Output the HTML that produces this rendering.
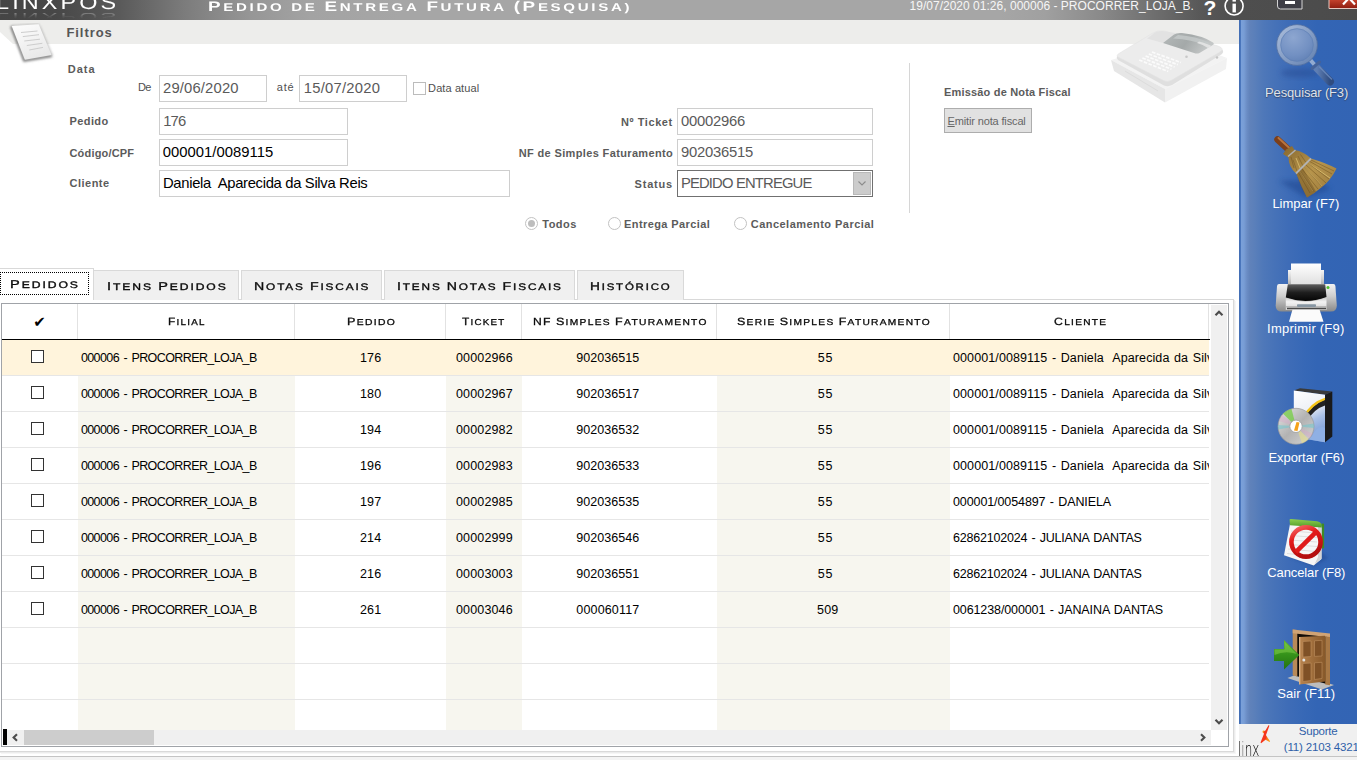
<!DOCTYPE html>
<html lang="pt-BR">
<head>
<meta charset="utf-8">
<title>Pedido de Entrega Futura (Pesquisa)</title>
<style>
*{box-sizing:border-box;margin:0;padding:0}
html,body{width:1357px;height:760px;overflow:hidden;background:#fff}
body{position:relative;font-family:"Liberation Sans","DejaVu Sans",sans-serif;font-size:11px;color:#000}
.abs{position:absolute}
svg{position:absolute;overflow:visible}
#titlebar{position:absolute;left:0;top:0;width:1357px;height:20px;
 background:linear-gradient(90deg,#454545 0px,#474747 55px,#5a5a5a 120px,#7c7c7c 185px,#969696 250px,#a3a3a3 310px,#a6a6a6 400px,#a6a6a6 1000px,#a0a0a0 1045px,#8a8a8a 1100px,#6e6e6e 1155px,#585858 1200px,#4e4e4e 1240px,#4b4b4b 1357px)}
.bg{text-rendering:geometricPrecision;white-space:nowrap;transform-origin:0 50%;text-transform:uppercase;position:absolute}
.bg .w{display:inline-block}
.bg .w::first-letter{font-size:120%}
.bg .ww{font-size:120%}
#ttl .w::first-letter{font-size:125%}
.th1 .w::first-letter{font-size:122%}
.th1 .ww{font-size:119%}
#band{position:absolute;left:0;top:20px;width:1239px;height:24px;background:#ededeb}
.t{position:absolute;white-space:pre;line-height:16px}
.lbl{font-weight:bold;font-size:11px;color:#5b5b5b}
.sm{font-size:11px;color:#505050}
.it{font-size:14.8px;color:#5a5a5a}
.it.k{color:#000}
.inp{position:absolute;border:1px solid #cecece;background:#fff;height:27px}
#side{position:absolute;left:1239px;top:20px;width:118px;height:704px;
 background:linear-gradient(90deg,#3f6bb2 0px,#4a76bc 1.5px,#7aa0d9 2.5px,#789dd5 5px,#6a8cc4 8px,#6082ba 11px,#5a7fba 16px,#4f78b9 24px,#4672b8 36px,#3e6cb7 50px,#3768b6 65px,#3365b5 78px,#3364b4 118px)}
.sl{color:#fff;font-size:13px}
#sup{position:absolute;left:1239px;top:724px;width:118px;height:32px;background:#f0f0f0}
#bot{position:absolute;left:0;top:756px;width:1357px;height:4px;background:#f3f3f3;border-top:1px solid #c4c4c4}
.tab{position:absolute;top:270px;height:30px;background:#f0f0f0;border:1px solid #d9d9d9;border-bottom:none}
.t1{font-size:9.5px;line-height:16px;letter-spacing:1.5px;color:#111;-webkit-text-stroke:0.33px #000}
.th1{font-size:8.6px;line-height:14px;letter-spacing:1.1px;color:#111;-webkit-text-stroke:0.28px #000}
#tabpage{position:absolute;left:-1px;top:299px;width:1235px;height:453px;border:1px solid #d9d9d9;background:#fff;box-shadow:1px 1px 0 #ececec,2px 2px 0 #f6f6f6}
#grid{position:absolute;left:1px;top:303px;width:1228px;height:444px;border:1px solid #a0a3a8;background:#fff;overflow:hidden}
.col{position:absolute;top:0;height:426px;background:#f7f6ef}
.row{position:absolute;left:0;width:1207px;height:36px;border-bottom:1px solid #e6e6e6}
.c{font-size:12.5px;color:#000;top:9px}
.cb{position:absolute;left:29px;top:10px;width:13px;height:13px;border:1px solid #333;background:#fff}
.rad{position:absolute;width:13px;height:13px;border:1px solid #c2c2c2;border-radius:50%;background:#fff}
.rad i{position:absolute;left:2px;top:2px;width:7px;height:7px;border-radius:50%;background:#bdbdbd}
</style>
</head>
<body>
<div id="titlebar"></div>
<div id="band"></div>
<svg style="left:0;top:20px" width="20" height="26"><path d="M0 12 L13 24 L0 24Z" fill="#fff"/></svg>
<div class="bg" id="linx" style="left:-4px;top:-7.4px;font-size:19.5px;letter-spacing:2.6px;color:#fff;line-height:20px;transform:scaleX(1.2)">LINXPOS</div>
<div class="bg" id="linxr" style="left:-4px;top:6px;font-size:19.5px;letter-spacing:2.6px;color:transparent;background:linear-gradient(to bottom,rgba(255,255,255,0) 25%,rgba(255,255,255,.1) 50%,rgba(255,255,255,.42) 85%);-webkit-background-clip:text;background-clip:text;line-height:20px;transform:scale(1.2,-0.55)">LINXPOS</div>
<div class="bg" id="ttl" style="left:207.6px;top:-4.2px;line-height:20px;color:#fff;font-weight:bold;font-size:11.2px;letter-spacing:2px;transform:scaleX(1.346)"><span class="w">Pedido</span> de <span class="w">Entrega</span> <span class="w">Futura</span> <span class="w">(Pesquisa)</span></div>
<div id="dt" class="t " style="left:909.5px;top:-1.6px;font-size:12px;letter-spacing:0.02px;color:#f6f6f6">19/07/2020 01:26, 000006 - PROCORRER_LOJA_B.</div>
<div class="abs" id="q" style="left:1203.5px;top:-3.8px;font-size:21px;font-weight:bold;color:#fff;line-height:24px">?</div>
<svg style="left:1223px;top:0" width="22" height="17"><circle cx="11.1" cy="6" r="9" fill="none" stroke="#fff" stroke-width="1.6"/><rect x="9.5" y="3.6" width="3.4" height="8.8" fill="#fff"/><rect x="9.5" y="-1" width="3.4" height="2.6" fill="#fff"/></svg>
<svg style="left:1277px;top:0" width="80" height="10"><defs><linearGradient id="rg" x1="0" y1="0" x2="0" y2="1"><stop offset="0" stop-color="#c8452f"/><stop offset="1" stop-color="#8e1d10"/></linearGradient></defs><path d="M0.5 -1 V6 Q0.5 9 3.5 9 H25 V-1Z" fill="#3e3e46" stroke="#d4d4d4" stroke-width="1"/><rect x="8" y="1" width="10" height="3" fill="#fff"/><path d="M52 -1 V8.5 H81 V-1Z" fill="url(#rg)" stroke="#e6c8c0" stroke-width="1"/><path d="M66 4.5 L72 -2 M78 4.5 L72 -2" stroke="#fff" stroke-width="2.2" fill="none"/></svg>
<div id="filtros" class="t lbl" style="left:66.4px;top:25.1px;font-size:13px;letter-spacing:0.94px;color:#565656">Filtros</div>
<div id="l_data" class="t lbl" style="left:67.7px;top:61.1px;font-size:11px;letter-spacing:1.05px;">Data</div>
<div id="l_de" class="t sm" style="left:137.9px;top:79.3px;font-size:11px;letter-spacing:-0.46px;">De</div>
<div id="l_ate" class="t sm" style="left:276.7px;top:79.3px;font-size:11px;letter-spacing:0.85px;">até</div>
<div id="l_da" class="t sm" style="left:428.1px;top:80.2px;font-size:11px;letter-spacing:0.10px;">Data atual</div>
<div id="l_ped" class="t lbl" style="left:69.5px;top:113.1px;font-size:11px;letter-spacing:0.41px;">Pedido</div>
<div id="l_cod" class="t lbl" style="left:69.5px;top:144.8px;font-size:11px;letter-spacing:0.18px;">Código/CPF</div>
<div id="l_cli" class="t lbl" style="left:69.5px;top:175.3px;font-size:11px;letter-spacing:0.49px;">Cliente</div>
<div id="l_tic" class="t lbl" style="left:621.0px;top:114.2px;font-size:11px;letter-spacing:0.57px;">Nº Ticket</div>
<div id="l_nf" class="t lbl" style="left:518.7px;top:144.8px;font-size:11px;letter-spacing:0.36px;">NF de Simples Faturamento</div>
<div id="l_st" class="t lbl" style="left:634.6px;top:175.8px;font-size:11px;letter-spacing:0.80px;">Status</div>
<div id="r1" class="t lbl" style="left:542.3px;top:215.9px;font-size:11px;letter-spacing:0.45px;">Todos</div>
<div id="r2" class="t lbl" style="left:624.0px;top:215.9px;font-size:11px;letter-spacing:0.41px;">Entrega Parcial</div>
<div id="r3" class="t lbl" style="left:750.8px;top:215.9px;font-size:11px;letter-spacing:0.46px;">Cancelamento Parcial</div>
<div id="l_em" class="t lbl" style="left:944.0px;top:84.2px;font-size:11px;letter-spacing:0.18px;">Emissão de Nota Fiscal</div>
<div class="inp" style="left:159px;top:75px;width:108px;"></div>
<div class="inp" style="left:299px;top:75px;width:108px;"></div>
<div class="inp" style="left:159px;top:108px;width:189px;"></div>
<div class="inp" style="left:159px;top:139px;width:189px;"></div>
<div class="inp" style="left:159px;top:170px;width:351px;"></div>
<div class="inp" style="left:677px;top:108px;width:196px;"></div>
<div class="inp" style="left:677px;top:139px;width:196px;"></div>
<div class="inp" style="left:677px;top:170px;width:196px;border-color:#707070"></div>
<div id="i_de" class="t it" style="left:163.0px;top:79.8px;font-size:14.8px;letter-spacing:0.16px;">29/06/2020</div>
<div id="i_ate" class="t it" style="left:303.8px;top:79.8px;font-size:14.8px;letter-spacing:0.23px;">15/07/2020</div>
<div id="i_ped" class="t it" style="left:163.2px;top:112.6px;font-size:14.8px;letter-spacing:-0.80px;">176</div>
<div id="i_cod" class="t it k" style="left:162.7px;top:143.7px;font-size:14.8px;letter-spacing:0.04px;">000001/0089115</div>
<div id="i_cli" class="t it k" style="left:163.0px;top:174.7px;font-size:14.8px;letter-spacing:-0.32px;">Daniela  Aparecida da Silva Reis</div>
<div id="i_tic" class="t it" style="left:680.9px;top:112.9px;font-size:14.8px;letter-spacing:-0.21px;">00002966</div>
<div id="i_nf" class="t it" style="left:680.9px;top:143.9px;font-size:14.8px;letter-spacing:-0.21px;">902036515</div>
<div id="i_st" class="t it" style="left:680.9px;top:174.9px;font-size:14.8px;letter-spacing:-0.83px;">PEDIDO ENTREGUE</div>
<div class="abs" style="left:413px;top:82px;width:13px;height:13px;border:1px solid #bcbcbc;background:#fff"></div>
<div class="abs" style="left:853px;top:172px;width:18px;height:23px;background:#cccccc;border:1px solid #b8b8b8"></div>
<svg style="left:857px;top:180px" width="10" height="7" viewBox="0 0 10 7"><path d="M1.5 1.5 L5 5 L8.5 1.5" fill="none" stroke="#8c8c8c" stroke-width="1.1"/></svg>
<div class="rad" style="left:525px;top:217px"><i></i></div>
<div class="rad" style="left:608px;top:217px"></div>
<div class="rad" style="left:734px;top:217px"></div>
<div class="abs" style="left:909px;top:63px;width:1px;height:150px;background:#d6d6d6"></div>
<div class="abs" id="btn" style="left:944px;top:108px;width:88px;height:25px;background:#e1e1e1;border:1px solid #adadad"></div>
<div id="btnt" class="t sm" style="left:947.5px;top:113.0px;font-size:11px;letter-spacing:-0.14px;color:#666"><u>E</u>mitir nota fiscal</div>
<div id="side"></div>
<svg id="icons" style="left:0;top:0" width="1357" height="760" viewBox="0 0 1357 760">
<defs>
<filter id="bl0" x="-30%" y="-30%" width="160%" height="160%"><feGaussianBlur stdDeviation="1"/></filter>
<filter id="bl1" x="-30%" y="-30%" width="160%" height="160%"><feGaussianBlur stdDeviation="1.6"/></filter>
<filter id="bl2" x="-30%" y="-30%" width="160%" height="160%"><feGaussianBlur stdDeviation="2.5"/></filter>
<radialGradient id="glass" cx="0.4" cy="0.3" r="0.8"><stop offset="0" stop-color="#8da6d0"/><stop offset="0.6" stop-color="#7290c2"/><stop offset="1" stop-color="#5b7bb0"/></radialGradient>
<linearGradient id="ring" x1="0" y1="0" x2="1" y2="1"><stop offset="0" stop-color="#a9bcda"/><stop offset="1" stop-color="#6482b2"/></linearGradient>
<linearGradient id="hand" x1="0" y1="0" x2="1" y2="0"><stop offset="0" stop-color="#5f7fb4"/><stop offset="1" stop-color="#2f4c80"/></linearGradient>
<linearGradient id="straw" x1="0" y1="0" x2="1" y2="1"><stop offset="0" stop-color="#86672e"/><stop offset="0.5" stop-color="#b8954c"/><stop offset="1" stop-color="#97763a"/></linearGradient>
<linearGradient id="silver" x1="0" y1="0" x2="0" y2="1"><stop offset="0" stop-color="#f6f6f6"/><stop offset="0.55" stop-color="#d2d2d2"/><stop offset="1" stop-color="#a9a9a9"/></linearGradient>
<linearGradient id="silver2" x1="0" y1="0" x2="0" y2="1"><stop offset="0" stop-color="#f2f2f2"/><stop offset="0.45" stop-color="#cdcdcd"/><stop offset="0.8" stop-color="#a2a2a2"/><stop offset="1" stop-color="#8a8a8a"/></linearGradient>
<linearGradient id="front" x1="0" y1="0" x2="0" y2="1"><stop offset="0" stop-color="#c9c9c9"/><stop offset="0.35" stop-color="#f3f3f3"/><stop offset="1" stop-color="#d2d2d2"/></linearGradient>
<linearGradient id="blk" x1="0" y1="0" x2="0" y2="1"><stop offset="0" stop-color="#5e5e5e"/><stop offset="0.5" stop-color="#1e1e1e"/><stop offset="1" stop-color="#050505"/></linearGradient>
<linearGradient id="pap" x1="0" y1="0" x2="0" y2="1"><stop offset="0" stop-color="#ffffff"/><stop offset="1" stop-color="#dedede"/></linearGradient>
<linearGradient id="boxf" x1="0" y1="0" x2="0.3" y2="1"><stop offset="0" stop-color="#ffffff"/><stop offset="0.45" stop-color="#eef1f6"/><stop offset="0.7" stop-color="#a9c0e6"/><stop offset="1" stop-color="#7e9fd8"/></linearGradient>
<linearGradient id="cd" x1="0" y1="0" x2="1" y2="1"><stop offset="0" stop-color="#e6e6e6"/><stop offset="0.5" stop-color="#b2b2b2"/><stop offset="1" stop-color="#d6d6d6"/></linearGradient>
<linearGradient id="red" x1="0" y1="0" x2="0.4" y2="1"><stop offset="0" stop-color="#f46a6a"/><stop offset="0.4" stop-color="#e41a1a"/><stop offset="1" stop-color="#b40e0e"/></linearGradient>
<linearGradient id="grn" x1="0" y1="0" x2="0" y2="1"><stop offset="0" stop-color="#8fd04e"/><stop offset="1" stop-color="#4f9a2a"/></linearGradient>
<linearGradient id="arrow" x1="0" y1="0" x2="0" y2="1"><stop offset="0" stop-color="#5fb52e"/><stop offset="0.5" stop-color="#35921a"/><stop offset="1" stop-color="#247212"/></linearGradient>
<linearGradient id="door" x1="0" y1="0" x2="1" y2="0"><stop offset="0" stop-color="#b8844f"/><stop offset="1" stop-color="#875829"/></linearGradient>
<linearGradient id="cover" x1="0" y1="0" x2="1" y2="0.3"><stop offset="0" stop-color="#b4b9b9"/><stop offset="0.55" stop-color="#a4a9a9"/><stop offset="1" stop-color="#c4c7c7"/></linearGradient>
<linearGradient id="sheet" x1="0" y1="0" x2="0.5" y2="1"><stop offset="0" stop-color="#fefefe"/><stop offset="1" stop-color="#e9e9e9"/></linearGradient>
</defs>

<!-- paper sheet (filtros) -->
<path d="M10.5 27 L24 62 L53 57 L40 27Z" fill="#8a8a8a" opacity=".4" filter="url(#bl1)"/>
<path d="M11.2 26.2 L24.2 60.5 L51.5 55.8" fill="none" stroke="#505050" stroke-width="2.4" opacity=".62" filter="url(#bl0)"/>
<path d="M11.7 25.8 L38.7 24" fill="none" stroke="#8a8a8a" stroke-width="1" opacity=".7" filter="url(#bl0)"/>
<path d="M38.7 24.2 L51.8 55.3" fill="none" stroke="#9a9a9a" stroke-width="1" opacity=".6" filter="url(#bl0)"/>
<path d="M11.7 26 L38.7 24.2 L51.5 55.1 L24.9 59.7Z" fill="url(#sheet)"/>
<g stroke="#cdcdcd" stroke-width="1" fill="none"><path d="M21 32.5 L37.5 31"/><path d="M22.8 36.6 L39 34.7"/><path d="M24.3 41 L40 39.2"/><path d="M26.8 45.5 L42.3 43.3"/><path d="M29.3 50 L43 47.4"/></g>

<!-- cash register -->
<g>
<path d="M1111 60 L1165 89 L1227 58 L1180 40Z" fill="#f3f3f3"/>
<path d="M1111 60 L1165 89 L1165 102.5 L1114 71Z" fill="#e6e6e6"/>
<path d="M1165 89 L1227 58 L1226 69 L1165 102.5Z" fill="#f1f1f1"/>
<path d="M1125 71 L1158 91" stroke="#dcdcdc" stroke-width="1"/>
<path d="M1117 56 Q1116 58 1118 60 L1164 85.5 Q1168 87 1172 85 L1222 54 Q1224 52 1222.6 49.5 L1168 79Z" fill="#dfdfdf"/>
<path d="M1119 53.5 L1152 33.5 Q1157 30 1164 31 L1218 46 Q1225 48.5 1220 52 L1171 80.5 Q1167.500 82.500 1163.500 80.500 L1119 57.500 Q1115.500 55.500 1119 53.500Z" fill="#ececec" stroke="#e3e3e3" stroke-width=".6"/>
<path d="M1147 38.5 L1155 32.5 Q1158 30.500 1163 31 L1178 33.500 L1163 43Z" fill="#e2e2e2"/>
<path d="M1163 43 L1174 34.500 Q1177 32.500 1182 33 Q1203 35.500 1213 42.500 Q1215 44 1212 45.500 L1199.500 53 Q1197 54 1194 53Z" fill="url(#cover)"/>
<path d="M1178 35 Q1196 36 1210 43 L1206 45.500 Q1192 39.500 1173 38.500Z" fill="#c6caca" opacity=".8"/><path d="M1199 41.500 Q1207 43.500 1211.500 46 L1208 48 Q1204 45 1197 43Z" fill="#e8e8e8" opacity=".8"/>
<g stroke="#fbfbfb" stroke-width="1.7" stroke-dasharray="3.6 1.4" fill="none">
<path d="M1152 52 L1181 62.500"/><path d="M1148.800 54 L1177.800 64.700"/><path d="M1145.600 56 L1174.600 67"/><path d="M1142.400 58 L1171.400 69.200"/><path d="M1139.200 60 L1168.200 71.500"/>
</g>
<circle cx="1186.500" cy="56.800" r="1.300" fill="#c8c8c8"/><circle cx="1217" cy="57.500" r="1.200" fill="#c4c4c4"/>
</g>

<!-- magnifier -->
<ellipse cx="1300" cy="73" rx="19" ry="4.500" fill="#2a4f96" opacity=".55" filter="url(#bl2)"/>
<path d="M1309.500 59 L1316.500 67" stroke="#93abd0" stroke-width="4"/>
<path d="M1317 68 L1330 81.500" stroke="url(#hand)" stroke-width="8" stroke-linecap="round"/>
<path d="M1319.500 67 L1331.500 79" stroke="#6d8cc0" stroke-width="1.500" stroke-linecap="round" opacity=".8"/>
<path d="M1312 68.500 L1319.500 62" stroke="#45639a" stroke-width="3" stroke-linecap="round"/>
<circle cx="1297" cy="45" r="18.500" fill="url(#glass)" stroke="url(#ring)" stroke-width="4"/>
<circle cx="1297" cy="45" r="16.300" fill="none" stroke="#5f7fb4" stroke-width=".8" opacity=".8"/>
<circle cx="1297" cy="45" r="20.400" fill="none" stroke="#4f6c9e" stroke-width=".9" opacity=".85"/>

<!-- broom -->
<path d="M1279 181 L1306 198 L1331 189 L1318 180Z" fill="#234a92" opacity=".6" filter="url(#bl2)"/>
<path d="M1277.500 139.500 L1290 151" stroke="#7c3f1a" stroke-width="6.500" stroke-linecap="round"/>
<path d="M1278.500 138 L1290.500 149" stroke="#b8743f" stroke-width="2" stroke-linecap="round"/>
<path d="M1283 154 L1286 149.500 L1292 146 L1294.500 150 Q1304 151.500 1311 158.500 Q1326 163 1336.500 168.500 Q1331 180 1322 187 Q1315 193 1307 197.500 Q1301 186 1296.500 174 Q1288.500 167 1288.500 157.500Z" fill="url(#straw)"/>
<g stroke="#7f6128" stroke-width=".9" fill="none" opacity=".75"><path d="M1298 172 L1310 193"/><path d="M1302 169 L1318 189"/><path d="M1306 165 L1326 183"/><path d="M1309 161 L1332 174"/><path d="M1293 160 L1297 171"/><path d="M1298 156 L1303 166"/></g>
<g stroke="#e3c877" stroke-width=".9" fill="none" opacity=".8"><path d="M1300 171 L1313 191"/><path d="M1304 167 L1322 186"/><path d="M1308 163 L1330 178"/><path d="M1296 158 L1300 168"/></g>
<path d="M1296.5 174 Q1300 186 1307 197.5 Q1312 195 1316 191.500 L1302 167Z" fill="#6b4e1e" opacity=".45"/>
<g stroke="#6e5222" stroke-width=".7" fill="none" opacity=".7"><path d="M1300 170.500 L1314 191.500"/><path d="M1304 167 L1322 186.500"/><path d="M1308 163 L1329 179"/><path d="M1311 160 L1334 171"/><path d="M1291 157 L1294 168"/><path d="M1300.500 154.500 L1306 162.500"/></g>
<path d="M1288 156.500 L1295.500 150" stroke="#aeaeae" stroke-width="1.600"/>
<path d="M1296 173.500 L1311 158.500" stroke="#b2b2b2" stroke-width="1.800"/>

<!-- printer -->
<rect x="1288" y="270" width="36" height="16" fill="url(#silver)"/>
<rect x="1291" y="263.500" width="30" height="22" fill="url(#pap)"/>
<path d="M1279 284 Q1277.300 284 1277 286 L1275.700 305.500 Q1275.700 311.500 1281.500 311.500 L1331 311.500 Q1336.800 311.500 1336.800 305.500 L1335.400 286 Q1335.200 284 1333.500 284Z" fill="url(#silver2)"/>
<path d="M1287.800 284.300 L1325.200 284.300 L1326.500 297 Q1306 304.500 1285.800 297.500Z" fill="url(#blk)"/>
<path d="M1285.800 298 Q1306 305 1326.500 297.500 L1326.500 310 L1285.800 310Z" fill="url(#front)"/>
<rect x="1286" y="306.300" width="40.500" height="1" fill="#a8a8a8"/>
<rect x="1297" y="304.300" width="19" height="2.600" rx=".8" fill="#8796a3"/>
<path d="M1292.500 309.500 L1319.500 309.500 L1323.500 321.800 L1289 321.800Z" fill="#fbfbfb"/>
<path d="M1287 308.600 L1326 308.600" stroke="#4a4a4a" stroke-width="1.500"/>
<circle cx="1328" cy="287.600" r="1.500" fill="#4fc02c"/>

<!-- export -->
<path d="M1293.800 390.400 L1300 388.300 L1332.300 391.500 L1325 394.800Z" fill="#3a3a3a"/>
<path d="M1325 394.800 L1332.300 391.500 L1332.300 436.500 L1325 442.200Z" fill="#1a1a1a"/>
<path d="M1293.800 390.400 L1325 394.800 L1325 442.200 L1293.800 436.900Z" fill="url(#boxf)"/>
<path d="M1304 418 Q1312 404 1325 399.500 L1325 405.500 Q1314 409 1308 420Z" fill="#222"/>
<path d="M1302.500 417 Q1311 402 1325 397.800 L1325 400 Q1312.500 404.500 1304.500 418Z" fill="#f5c518"/>
<path d="M1312 436 Q1318 424 1325 428 L1325 442.200 L1308 439.300Z" fill="#8fb0e4"/>
<circle cx="1296" cy="426.300" r="18" fill="url(#cd)" stroke="#9a9a9a" stroke-width=".7"/>
<path d="M1296 426.300 L1283 413.800 A18 18 0 0 1 1291.500 408.900Z" fill="#6fcf3a" opacity=".7"/>
<path d="M1296 426.300 L1279 421 A18 18 0 0 1 1282 414.800Z" fill="#d9a6c8" opacity=".4"/>
<path d="M1296 426.300 L1278.200 429.500 A18 18 0 0 1 1278 425Z" fill="#5fc8d0" opacity=".45"/>
<path d="M1296 426.300 L1313.800 423.500 A18 18 0 0 1 1314 428Z" fill="#5fc8d0" opacity=".45"/>
<path d="M1296 426.300 L1312.500 433.500 A18 18 0 0 1 1309.500 438.200Z" fill="#d9a6c8" opacity=".4"/>
<path d="M1296 426.300 L1308.500 439.300 A18 18 0 0 1 1302 443.300Z" fill="#e8e08a" opacity=".6"/>
<circle cx="1296" cy="426.300" r="6.200" fill="#fff" stroke="#9c9c9c" stroke-width=".8"/>
<path d="M1294 430.500 L1296.500 422 L1299.500 422.500 L1297.500 431Z" fill="#f5a21c"/>

<!-- cancel -->
<path d="M1287 556 L1314 567 L1328 558 L1322 552Z" fill="#234a92" opacity=".5" filter="url(#bl1)"/>
<rect x="1321.300" y="523.500" width="2.800" height="25" rx="1" fill="#3f8a26"/>
<path d="M1290 524 L1321.500 526 L1321.500 559 L1313.700 565.400 L1284 555.300Z" fill="#f6f6f6"/>
<path d="M1314.500 564.500 L1321.500 558.500 L1321.500 527 L1318 527 L1318 557Z" fill="#d4d4d4"/>
<g stroke="#d8d8d8" stroke-width=".8"><path d="M1291 531 L1317 533"/><path d="M1290.500 535.500 L1317 537.500"/><path d="M1290 540 L1317 542"/><path d="M1289 544.500 L1317 546.500"/><path d="M1288 549 L1316 551.500"/><path d="M1287 553.500 L1315 556.500"/></g>
<path d="M1289.600 519.800 Q1289.600 518.800 1291 518.900 L1317 521.200 Q1322.500 522 1321.800 527.500 L1290 525.300Z" fill="url(#grn)"/>
<circle cx="1306" cy="542" r="14.600" fill="none" stroke="url(#red)" stroke-width="4.600"/>
<path d="M1295.800 552.200 L1316.200 531.800" stroke="#e01a1a" stroke-width="4.600"/>

<!-- door -->
<path d="M1287.400 678 L1298 674 L1334 685 L1322 689.500Z" fill="#bdbdbd"/>
<path d="M1296 632 L1327 636 L1327 684 L1296 676Z" fill="#120c06"/>
<path d="M1292.700 629.500 L1297.300 630 L1297.300 676.500 L1292.700 675.400Z" fill="#b98a58"/>
<path d="M1292.700 629.500 L1330 633.400 L1330 637.300 L1292.700 633.300Z" fill="#d0a374"/>
<path d="M1325.200 636.500 L1330 637 L1330 685.200 L1325.200 684.500Z" fill="#a87845"/>
<path d="M1299.100 637 L1325 635.800 L1325.400 681.600 L1299.100 684.400Z" fill="url(#door)"/>
<path d="M1299.100 637 L1300.300 637 L1300.300 684.200 L1299.100 684.400Z" fill="#e0b78a"/>
<g fill="#7f5126" stroke="#c09060" stroke-width=".6"><path d="M1303 641.500 L1311 641 L1311 656.500 L1303 657Z"/><path d="M1314.500 640.800 L1322 640.300 L1322 656 L1314.500 656.400Z"/><path d="M1303 663.500 L1311 663 L1311 680.500 L1303 681.500Z"/><path d="M1314.500 662.800 L1322 662.300 L1322 678.500 L1314.500 679.500Z"/></g>
<circle cx="1303.800" cy="660" r="1.500" fill="#e4e4e4"/>
<path d="M1274 649 L1284 649 L1284 640 L1299.300 655 L1284 669.400 L1284 661 L1274 661Z" fill="url(#arrow)"/>
<path d="M1274.500 649.500 L1284.500 649.500 L1284.500 641.500 L1297 654 Q1285 650 1274.500 655Z" fill="#8fd655" opacity=".45"/>
</svg>

<div id="s1" class="t sl" style="left:1265.1px;top:85.2px;font-size:13px;letter-spacing:-0.16px;color:#dfe4ee;text-shadow:0 0 1px #2d3f66,0 1px 1px #3a4d74">Pesquisar (F3)</div>
<div id="s2" class="t sl" style="left:1272.4px;top:196.4px;font-size:13px;letter-spacing:-0.02px;">Limpar (F7)</div>
<div id="s3" class="t sl" style="left:1267.1px;top:320.8px;font-size:13px;letter-spacing:0.24px;">Imprimir (F9)</div>
<div id="s4" class="t sl" style="left:1268.4px;top:449.8px;font-size:13px;letter-spacing:-0.05px;">Exportar (F6)</div>
<div id="s5" class="t sl" style="left:1267.3px;top:565.2px;font-size:13px;letter-spacing:-0.11px;">Cancelar (F8)</div>
<div id="s6" class="t sl" style="left:1277.2px;top:685.8px;font-size:13px;letter-spacing:0.13px;">Sair (F11)</div>
<div id="sup"></div>
<div id="sup1" class="t " style="left:1298.8px;top:723.0px;font-size:11.5px;letter-spacing:-0.23px;color:#2f5fa8">Suporte</div>
<div id="sup2" class="t " style="left:1283.8px;top:738.9px;font-size:11.5px;letter-spacing:-0.15px;color:#2f5fa8">(11) 2103 4321</div>
<div class="abs" id="linxlogo" style="left:1237.9px;top:740.3px;font-family:'DejaVu Sans Light','DejaVu Sans','Liberation Sans',sans-serif;font-weight:200;font-size:19.5px;line-height:20px;color:#000;transform:scaleX(.615);transform-origin:0 0;white-space:nowrap">l<span style="color:#666">i</span>nx</div>
<svg style="left:0;top:0" width="1357" height="760"><defs><linearGradient id="fl" x1="0" y1="0" x2="1" y2="0"><stop offset="0" stop-color="#f5361c"/><stop offset="0.45" stop-color="#f8641c"/><stop offset="1" stop-color="#fdae1e"/></linearGradient></defs><circle cx="1263.7" cy="731.7" r="1.2" fill="#fba01c"/><path d="M1265.4 734.6 L1270.1 741.3 L1269.6 742 L1265.6 739.7 L1261.6 742.6Z" fill="url(#fl)"/><path d="M1268.7 725 L1269.4 725.8 L1266 735 L1266.6 738.2 L1261.2 743.2 L1260.5 742.5 L1263.9 734 L1263.5 731.8 L1265.4 730.6Z" fill="#f5361c"/></svg>
<div id="bot"></div>
<div id="tabpage"></div>
<div class="tab" style="left:93px;width:146px"></div>
<div class="tab" style="left:241px;width:141px"></div>
<div class="tab" style="left:384px;width:191px"></div>
<div class="tab" style="left:577px;width:107px"></div>
<div class="abs" style="left:-1px;top:268px;width:95px;height:32px;background:#fff;border:1px solid #d9d9d9;border-bottom:none"></div>
<div class="abs" style="left:0;top:272px;width:89px;height:23px;border:1px dotted #000"></div>
<div class="bg t1" id="t1" style="left:10.2px;top:277px;transform:scaleX(1.28)"><span class='w'>Pedidos</span></div>
<div class="bg t1" id="t2" style="left:106.6px;top:279px;transform:scaleX(1.274)"><span class='w'>Itens</span> <span class='w'>Pedidos</span></div>
<div class="bg t1" id="t3" style="left:254.1px;top:279px;transform:scaleX(1.242)"><span class='w'>Notas</span> <span class='w'>Fiscais</span></div>
<div class="bg t1" id="t4" style="left:397.3px;top:279px;transform:scaleX(1.239)"><span class='w'>Itens</span> <span class='w'>Notas</span> <span class='w'>Fiscais</span></div>
<div class="bg t1" id="t5" style="left:590px;top:279px;transform:scaleX(1.203)"><span class='w'>Histórico</span></div>
<div id="grid"><div class="col" style="left:76px;width:217px"></div>
<div class="col" style="left:444px;width:76px"></div>
<div class="col" style="left:715px;width:233px"></div>
<div class="abs" style="left:0;top:0;width:1208px;height:35px;background:#fff"></div>
<div class="abs" style="left:75px;top:0;width:1px;height:35px;background:#e2e2e2"></div>
<div class="abs" style="left:292px;top:0;width:1px;height:35px;background:#e2e2e2"></div>
<div class="abs" style="left:443px;top:0;width:1px;height:35px;background:#e2e2e2"></div>
<div class="abs" style="left:519px;top:0;width:1px;height:35px;background:#e2e2e2"></div>
<div class="abs" style="left:714px;top:0;width:1px;height:35px;background:#e2e2e2"></div>
<div class="abs" style="left:947px;top:0;width:1px;height:35px;background:#e2e2e2"></div>
<div class="abs" style="left:1206px;top:0;width:1px;height:35px;background:#e2e2e2"></div>
<div class="abs" style="left:0;top:35px;width:1208px;height:1px;background:#000"></div>
<div class="row" style="top:36px;background:#fff4dc;"><div class="cb"></div></div>
<div class="row" style="top:72px;"><div class="cb"></div></div>
<div class="row" style="top:108px;"><div class="cb"></div></div>
<div class="row" style="top:144px;"><div class="cb"></div></div>
<div class="row" style="top:180px;"><div class="cb"></div></div>
<div class="row" style="top:216px;"><div class="cb"></div></div>
<div class="row" style="top:252px;"><div class="cb"></div></div>
<div class="row" style="top:288px;"><div class="cb"></div></div>
<div class="row" style="top:324px;"></div>
<div class="row" style="top:360px;"></div>
<div class="row" style="top:396px;"></div>
<div class="abs" style="left:1209px;top:1px;width:16px;height:425px;background:#f0f0f0"></div>
<div class="abs" style="left:0;top:426px;width:1209px;height:15px;background:#f0f0f0"></div>
<div class="abs" style="left:0;top:425px;width:5px;height:16px;background:#fff"></div>
<div class="abs" style="left:1px;top:425px;width:4px;height:16px;background:#000"></div>
<div class="abs" style="left:22px;top:426px;width:130px;height:15px;background:#cdcdcd"></div>
<svg style="left:1210.5px;top:5px" width="12" height="8" viewBox="0 0 12 8"><path d="M2.5 6.3 L6 2.7 L9.5 6.3" fill="none" stroke="#4c4c4c" stroke-width="2.1"/></svg>
<svg style="left:1210.5px;top:414px" width="12" height="8" viewBox="0 0 12 8"><path d="M2.5 1.7 L6 5.3 L9.5 1.7" fill="none" stroke="#4c4c4c" stroke-width="2.1"/></svg>
<svg style="left:9px;top:428px" width="8" height="12" viewBox="0 0 8 12"><path d="M6 2.2 L2.6 5.5 L6 8.8" fill="none" stroke="#4c4c4c" stroke-width="2.1"/></svg>
<svg style="left:1197px;top:428px" width="8" height="12" viewBox="0 0 8 12"><path d="M2 2.2 L5.4 5.5 L2 8.8" fill="none" stroke="#4c4c4c" stroke-width="2.1"/></svg></div>
<div class="bg th1" id="h1" style="left:168px;top:314.8px;transform:scaleX(1.141)"><span class='w'>Filial</span></div>
<div class="bg th1" id="h2" style="left:347.2px;top:314.8px;transform:scaleX(1.204)"><span class='w'>Pedido</span></div>
<div class="bg th1" id="h3" style="left:462px;top:314.8px;transform:scaleX(1.136)"><span class='w'>Ticket</span></div>
<div class="bg th1" id="h4" style="left:533px;top:314.8px;transform:scaleX(1.189)"><span class='ww'>NF</span> <span class='w'>Simples</span> <span class='w'>Faturamento</span></div>
<div class="bg th1" id="h5" style="left:736.6px;top:314.8px;transform:scaleX(1.185)"><span class='w'>Serie</span> <span class='w'>Simples</span> <span class='w'>Faturamento</span></div>
<div class="bg th1" id="h6" style="left:1054px;top:314.8px;transform:scaleX(1.175)"><span class='w'>Cliente</span></div>
<div class="abs" id="chk" style="left:33.2px;top:314.3px;font-size:15px;line-height:16px;font-family:'DejaVu Sans',sans-serif">✔</div>
<div class="abs" style="left:0;top:340px;width:1209px;height:300px;overflow:hidden">
<div id="a0" class="t c" style="left:80.9px;top:9.7px;font-size:12.5px;letter-spacing:-0.59px;word-spacing:1.5px;">000006 - PROCORRER_LOJA_B</div>
<div id="b0" class="t c" style="left:360.0px;top:9.7px;font-size:12.5px;letter-spacing:0.12px;">176</div>
<div id="d0" class="t c" style="left:456.0px;top:9.7px;font-size:12.5px;letter-spacing:0.15px;">00002966</div>
<div id="e0" class="t c" style="left:576.3px;top:9.7px;font-size:12.5px;letter-spacing:0.04px;">902036515</div>
<div id="f0" class="t c" style="left:817.8px;top:9.7px;font-size:12.5px;letter-spacing:0.69px;">55</div>
<div id="g0" class="t c" style="left:953.0px;top:9.7px;font-size:12.5px;word-spacing:1px;letter-spacing:0.10px">000001/0089115 - Daniela  Aparecida da Silva Reis</div>
<div id="a1" class="t c" style="left:80.9px;top:45.7px;font-size:12.5px;letter-spacing:-0.59px;word-spacing:1.5px;">000006 - PROCORRER_LOJA_B</div>
<div id="b1" class="t c" style="left:360.0px;top:45.7px;font-size:12.5px;letter-spacing:0.12px;">180</div>
<div id="d1" class="t c" style="left:456.0px;top:45.7px;font-size:12.5px;letter-spacing:0.15px;">00002967</div>
<div id="e1" class="t c" style="left:576.3px;top:45.7px;font-size:12.5px;letter-spacing:0.04px;">902036517</div>
<div id="f1" class="t c" style="left:817.8px;top:45.7px;font-size:12.5px;letter-spacing:0.69px;">55</div>
<div id="g1" class="t c" style="left:953.0px;top:45.7px;font-size:12.5px;word-spacing:1px;letter-spacing:0.10px">000001/0089115 - Daniela  Aparecida da Silva Reis</div>
<div id="a2" class="t c" style="left:80.9px;top:81.7px;font-size:12.5px;letter-spacing:-0.59px;word-spacing:1.5px;">000006 - PROCORRER_LOJA_B</div>
<div id="b2" class="t c" style="left:360.0px;top:81.7px;font-size:12.5px;letter-spacing:0.12px;">194</div>
<div id="d2" class="t c" style="left:456.0px;top:81.7px;font-size:12.5px;letter-spacing:0.15px;">00002982</div>
<div id="e2" class="t c" style="left:576.3px;top:81.7px;font-size:12.5px;letter-spacing:0.04px;">902036532</div>
<div id="f2" class="t c" style="left:817.8px;top:81.7px;font-size:12.5px;letter-spacing:0.69px;">55</div>
<div id="g2" class="t c" style="left:953.0px;top:81.7px;font-size:12.5px;word-spacing:1px;letter-spacing:0.10px">000001/0089115 - Daniela  Aparecida da Silva Reis</div>
<div id="a3" class="t c" style="left:80.9px;top:117.7px;font-size:12.5px;letter-spacing:-0.59px;word-spacing:1.5px;">000006 - PROCORRER_LOJA_B</div>
<div id="b3" class="t c" style="left:360.0px;top:117.7px;font-size:12.5px;letter-spacing:0.12px;">196</div>
<div id="d3" class="t c" style="left:456.0px;top:117.7px;font-size:12.5px;letter-spacing:0.15px;">00002983</div>
<div id="e3" class="t c" style="left:576.3px;top:117.7px;font-size:12.5px;letter-spacing:0.04px;">902036533</div>
<div id="f3" class="t c" style="left:817.8px;top:117.7px;font-size:12.5px;letter-spacing:0.69px;">55</div>
<div id="g3" class="t c" style="left:953.0px;top:117.7px;font-size:12.5px;word-spacing:1px;letter-spacing:0.10px">000001/0089115 - Daniela  Aparecida da Silva Reis</div>
<div id="a4" class="t c" style="left:80.9px;top:153.7px;font-size:12.5px;letter-spacing:-0.59px;word-spacing:1.5px;">000006 - PROCORRER_LOJA_B</div>
<div id="b4" class="t c" style="left:360.0px;top:153.7px;font-size:12.5px;letter-spacing:0.12px;">197</div>
<div id="d4" class="t c" style="left:456.0px;top:153.7px;font-size:12.5px;letter-spacing:0.15px;">00002985</div>
<div id="e4" class="t c" style="left:576.3px;top:153.7px;font-size:12.5px;letter-spacing:0.04px;">902036535</div>
<div id="f4" class="t c" style="left:817.8px;top:153.7px;font-size:12.5px;letter-spacing:0.69px;">55</div>
<div id="g4" class="t c" style="left:953.0px;top:153.7px;font-size:12.5px;letter-spacing:-0.10px;word-spacing:1px;">000001/0054897 - DANIELA</div>
<div id="a5" class="t c" style="left:80.9px;top:189.7px;font-size:12.5px;letter-spacing:-0.59px;word-spacing:1.5px;">000006 - PROCORRER_LOJA_B</div>
<div id="b5" class="t c" style="left:360.0px;top:189.7px;font-size:12.5px;letter-spacing:0.12px;">214</div>
<div id="d5" class="t c" style="left:456.0px;top:189.7px;font-size:12.5px;letter-spacing:0.15px;">00002999</div>
<div id="e5" class="t c" style="left:576.3px;top:189.7px;font-size:12.5px;letter-spacing:0.04px;">902036546</div>
<div id="f5" class="t c" style="left:817.8px;top:189.7px;font-size:12.5px;letter-spacing:0.69px;">55</div>
<div id="g5" class="t c" style="left:953.0px;top:189.7px;font-size:12.5px;letter-spacing:-0.21px;word-spacing:1px;">62862102024 - JULIANA DANTAS</div>
<div id="a6" class="t c" style="left:80.9px;top:225.7px;font-size:12.5px;letter-spacing:-0.59px;word-spacing:1.5px;">000006 - PROCORRER_LOJA_B</div>
<div id="b6" class="t c" style="left:360.0px;top:225.7px;font-size:12.5px;letter-spacing:0.12px;">216</div>
<div id="d6" class="t c" style="left:456.0px;top:225.7px;font-size:12.5px;letter-spacing:0.15px;">00003003</div>
<div id="e6" class="t c" style="left:576.3px;top:225.7px;font-size:12.5px;letter-spacing:0.04px;">902036551</div>
<div id="f6" class="t c" style="left:817.8px;top:225.7px;font-size:12.5px;letter-spacing:0.69px;">55</div>
<div id="g6" class="t c" style="left:953.0px;top:225.7px;font-size:12.5px;letter-spacing:-0.21px;word-spacing:1px;">62862102024 - JULIANA DANTAS</div>
<div id="a7" class="t c" style="left:80.9px;top:261.7px;font-size:12.5px;letter-spacing:-0.59px;word-spacing:1.5px;">000006 - PROCORRER_LOJA_B</div>
<div id="b7" class="t c" style="left:360.0px;top:261.7px;font-size:12.5px;letter-spacing:0.12px;">261</div>
<div id="d7" class="t c" style="left:456.0px;top:261.7px;font-size:12.5px;letter-spacing:0.15px;">00003046</div>
<div id="e7" class="t c" style="left:576.3px;top:261.7px;font-size:12.5px;letter-spacing:0.16px;">000060117</div>
<div id="f7" class="t c" style="left:817.1px;top:261.7px;font-size:12.5px;letter-spacing:0.12px;">509</div>
<div id="g7" class="t c" style="left:953.0px;top:261.7px;font-size:12.5px;letter-spacing:-0.11px;word-spacing:1px;">0061238/000001 - JANAINA DANTAS</div>
</div>
</body>
</html>
